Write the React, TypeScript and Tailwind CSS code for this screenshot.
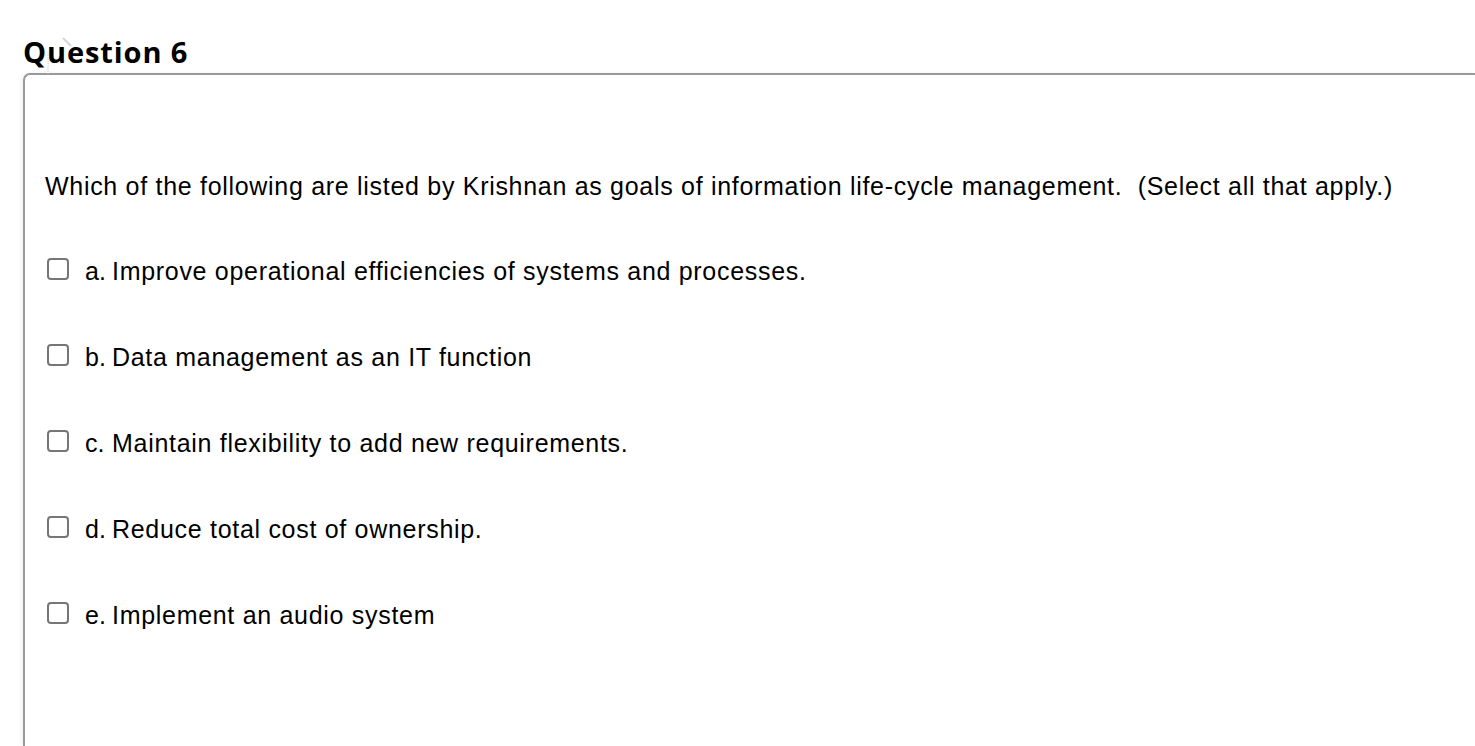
const OPTIONS = [
  { key: "a.", text: "Improve operational efficiencies of systems and processes." },
  { key: "b.", text: "Data management as an IT function" },
  { key: "c.", text: "Maintain flexibility to add new requirements." },
  { key: "d.", text: "Reduce total cost of ownership." },
  { key: "e.", text: "Implement an audio system" },
];

function Checkbox() {
  return (
    <span className="mt-[1px] block h-[22px] w-[22px] shrink-0 rounded-[4px] border-2 border-[#767676] bg-white" />
  );
}

export default function App() {
  return (
    <div className="flex h-[746px] flex-col overflow-hidden bg-white pl-[23px] pt-[33px]">
      <div className="relative">
        <h2 className="font-['Open_Sans',sans-serif] text-[29px] font-bold leading-[38px] tracking-[0.9px] text-black">
          Question 6
        </h2>
        {/* faint hover marks behind the heading */}
        <svg
          className="pointer-events-none absolute left-[20px] top-[2px]"
          width="40"
          height="40"
          viewBox="0 0 40 40"
        >
          <path d="M5 16 V40" stroke="#c8c8c8" strokeWidth="1" strokeDasharray="1 1" />
          <path d="M20 3 L28 11" stroke="#d6d6d6" strokeWidth="2" />
        </svg>
      </div>

      <div className="mt-[2px] flex-1 rounded-tl-[7px] border-l-2 border-t-2 border-[#999999] pl-[20px] pt-[97px] shadow-[-2px_0_4px_rgba(0,0,0,0.06)]">
        <p className="font-['Liberation_Sans',Arial,sans-serif] text-[25px] leading-[28px] tracking-[0.7px] text-black">
          Which of the following are listed by Krishnan as goals of information life-cycle management.&nbsp; (Select all that apply.)
        </p>

        <div className="mt-[57px] flex flex-col gap-[58px]">
          {OPTIONS.map((o) => (
            <label key={o.key} className="flex items-start pl-[2px]">
              <Checkbox />
              <span className="ml-[16px] font-['Liberation_Sans',Arial,sans-serif] text-[25px] leading-[28px] tracking-[0.7px] text-black">
                <span className="inline-block w-[27px] tracking-normal">{o.key}</span>
                {o.text}
              </span>
            </label>
          ))}
        </div>
      </div>
    </div>
  );
}
